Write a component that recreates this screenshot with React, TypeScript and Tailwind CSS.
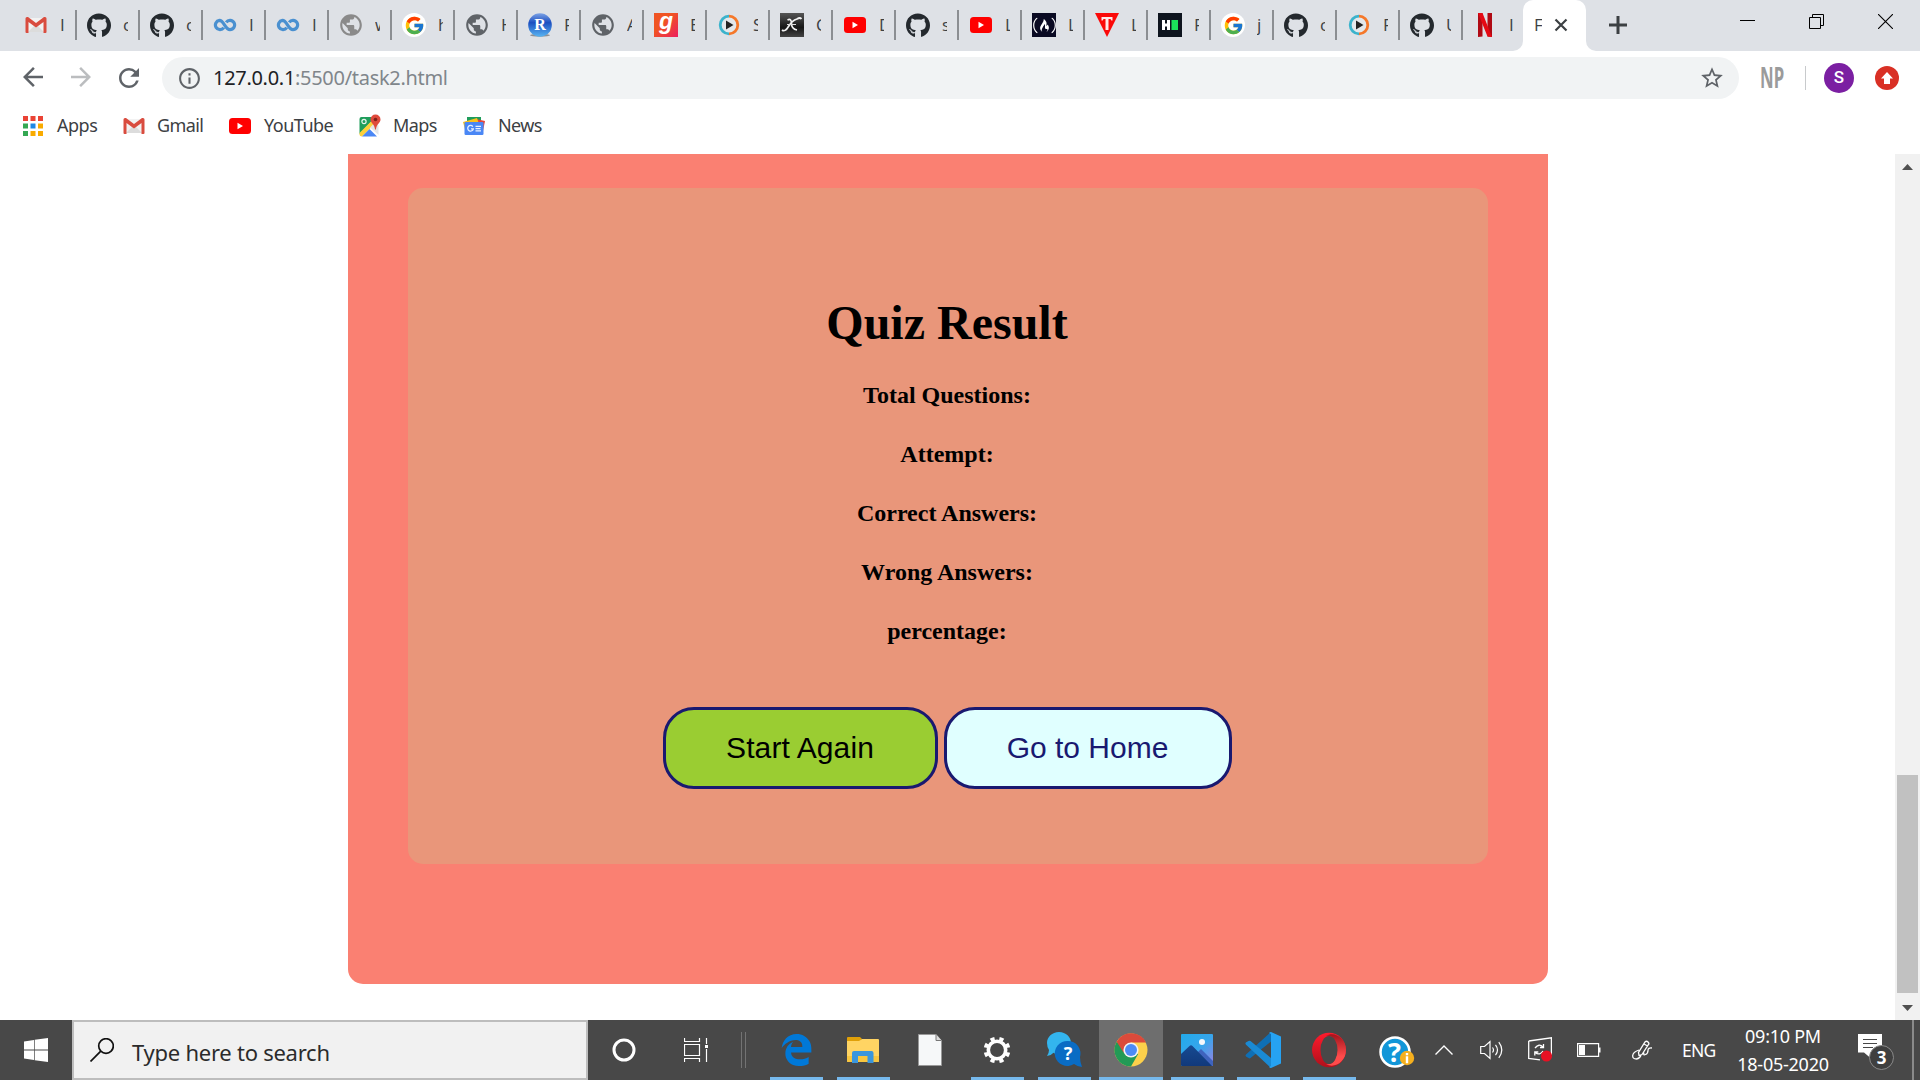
import React from 'react';
import { FaGithub, FaFreeCodeCamp } from 'react-icons/fa';
import { FcGoogle } from 'react-icons/fc';
import { MdPublic, MdArrowBack, MdArrowForward, MdRefresh, MdInfoOutline, MdStarBorder } from 'react-icons/md';

const Gmail = () => (
  <svg viewBox="0 0 24 24" className="h-6 w-6">
    <path d="M3 5h18v14H3z" fill="#f2f2f2" />
    <path d="M4 19l8-8 8 8z" fill="#dcdcdc" />
    <path d="M1.500 5.500q0-1.500 1.500-1.500h1l8 6 8-6h1q1.500 0 1.500 1.500V19q0 1-1 1h-2V9l-7.500 5.500L4.500 9v11h-2q-1 0-1-1z" fill="#d94c3f" />
  </svg>
);
const YouTube = () => (
  <svg viewBox="0 0 24 24" className="h-6 w-6">
    <rect x="1" y="4" width="22" height="16" rx="3.500" fill="#f00" />
    <path d="M9.500 8.700v6.600l5.500-3.300z" fill="#fff" />
  </svg>
);
const Github = () => <FaGithub size={25} color="#24292e" />;
const Coursera = () => (
  <svg viewBox="0 0 24 24" className="h-6 w-6" fill="none" stroke="#4a90d0" strokeWidth="3.200">
    <path d="M10.800 14.600A4.600 4.600 0 1 1 6.500 7.400C11 7.400 12 16.600 17 16.600a4.600 4.600 0 1 0-3.800-7.200" />
  </svg>
);
const Globe = ({ light }: { light?: boolean }) => <MdPublic size={26} className="shrink-0" color={light ? '#8a8a8a' : '#5f6368'} />;
const Google = () => (
  <span className="flex h-6 w-6 items-center justify-center rounded-full bg-white"><FcGoogle size={21} /></span>
);
const RStudio = () => (
  <svg viewBox="0 0 24 24" className="h-6 w-6">
    <defs>
      <linearGradient id="rs" x1="0" y1="0" x2="0" y2="1">
        <stop offset="0" stopColor="#7da3e6" /><stop offset=".4" stopColor="#1c4fc0" /><stop offset="1" stopColor="#58b4f2" />
      </linearGradient>
    </defs>
    <ellipse cx="12" cy="22.300" rx="10" ry="1.500" fill="#8c8f94" />
    <circle cx="12" cy="12" r="11.800" fill="url(#rs)" />
    <text x="12" y="16.500" textAnchor="middle" fontSize="16" fontWeight="700" fontFamily="Liberation Serif" fill="#fff">R</text>
  </svg>
);
const Gaana = () => (
  <svg viewBox="0 0 24 24" className="h-6 w-6">
    <defs>
      <linearGradient id="ga" x1="0" y1="0" x2="1" y2="1"><stop offset=".4" stopColor="#f05423" /><stop offset="1" stopColor="#ec1f5f" /></linearGradient>
    </defs>
    <path d="M0 0h24v24H0z" fill="url(#ga)" />
    <text x="12" y="16" textAnchor="middle" fontSize="23" fontWeight="700" fontStyle="italic" fontFamily="Liberation Sans" fill="#fff">g</text>
  </svg>
);
const Play = () => (
  <svg viewBox="0 0 24 24" className="h-6 w-6" fill="none" strokeWidth="2.800">
    <circle cx="12" cy="12" r="8" fill="#e4e8eb" />
    <path d="M12 20.800A8.800 8.800 0 0 1 12 3.200" stroke="#3bb3cc" />
    <path d="M12 3.200a8.800 8.800 0 0 1 0 17.600" stroke="#f5782a" />
    <path d="M9 7.500v9l7.500-4.500z" fill="#222" />
  </svg>
);
const XIcon = () => (
  <svg viewBox="0 0 24 24" className="h-6 w-6">
    <defs>
      <linearGradient id="xg" x1="0" y1="0" x2="0" y2="1"><stop offset="0" stopColor="#555" /><stop offset=".6" stopColor="#161616" /><stop offset="1" stopColor="#444" /></linearGradient>
    </defs>
    <path d="M0 0h24v24H0z" fill="url(#xg)" />
    <path d="M7.500 7q4-2 4 3.500T17 17M2 17q3 2.500 6.500-3.500T17 6q3-2 4.500 0" fill="none" stroke="#f2f2f2" strokeWidth="1.700" />
    <path d="M7 11.500h9" stroke="#ddd" strokeWidth="1" />
  </svg>
);
const Fcc = () => (
  <span className="flex h-6 w-6 items-center justify-center bg-[#0a0a23]"><FaFreeCodeCamp size={23} color="#fff" /></span>
);
const TIcon = () => (
  <svg viewBox="0 0 24 24" className="h-6 w-6">
    <path d="M0 0h24L12 24z" fill="#fb0909" />
    <path d="M6.500 4h11v3.600h-1.200L15.500 6H13.500v11h-3V6h-2l-.8 1.600H6.500z" fill="#ffe8e8" />
  </svg>
);
const HackerRank = () => (
  <svg viewBox="0 0 24 24" className="h-6 w-6">
    <path d="M0 0h24v24H0z" fill="#0e141e" />
    <path d="M4 7h3v3.500h2V7h3v10H9v-3.500H7V17H4z" fill="#fff" />
    <path d="M13.500 7h6.500v10h-6.500z" fill="#1be05a" />
  </svg>
);
const Netflix = () => (
  <svg viewBox="0 0 24 24" className="h-6 w-6">
    <path d="M5 0h4.500v23.500L5 24zM14.500 0H19v24l-4.500-.5z" fill="#b00a14" />
    <path d="M5 0h4.500L19 24l-4.500-.5z" fill="#e50914" />
  </svg>
);
const Maps = () => (
  <svg viewBox="0 0 24 24" className="h-6 w-6">
    <path d="M1.500 5q0-2 2-2H18L1.500 20z" fill="#1f9d5b" />
    <path d="M1.500 19L17 3.500l3 3L4 22.500q-2.500 0-2.500-2z" fill="#fdd13a" />
    <path d="M12 13.500l5-5 3.500 3V21z" fill="#e3e5e8" />
    <path d="M4 22.500l7.500-7.500 7.500 7.500z" fill="#4a87f5" />
    <circle cx="6" cy="7.500" r="2.100" fill="none" stroke="#e8f5ee" strokeWidth="1.200" />
    <path d="M17.500.5a5 5 0 0 1 5 5c0 3.500-4 4.500-4.600 10h-.8c-.6-5.500-4.600-6.500-4.600-10a5 5 0 0 1 5-5z" fill="#df4a3c" />
    <circle cx="17.500" cy="5.500" r="1.800" fill="#7d2119" />
  </svg>
);
const News = () => (
  <svg viewBox="0 0 24 24" className="h-6 w-6">
    <path d="M5 3h14v8H5z" fill="#1f9d5b" />
    <path d="M14 5l9 2-2 10h-7z" fill="#e5453a" />
    <path d="M1 8l14-4 3 9-14 6z" fill="#fbc11c" />
    <rect x="2.500" y="8" width="19" height="13" rx="1.200" fill="#4a87f5" />
    <path d="M10.800 12.600a2.800 2.800 0 1 0 .5 2.200H9M13.500 12.300H19M13.500 14.600h5M13.500 16.800H19" fill="none" stroke="#eaf1fe" strokeWidth="1.300" />
  </svg>
);

const tabs: [React.ReactNode, string][] = [
  [<Gmail />, 'I'], [<Github />, 'c'], [<Github />, 'c'], [<Coursera />, 'I'], [<Coursera />, 'I'], [<Globe light />, 'w'],
  [<Google />, 'h'], [<Globe />, 'H'], [<RStudio />, 'F'], [<Globe />, 'A'], [<Gaana />, 'E'], [<Play />, 'S'],
  [<XIcon />, 'C'], [<YouTube />, 'D'], [<Github />, 's'], [<YouTube />, 'L'], [<Fcc />, 'L'], [<TIcon />, 'L'],
  [<HackerRank />, 'F'], [<Google />, 'j'], [<Github />, 'c'], [<Play />, 'F'], [<Github />, 'U'], [<Netflix />, 'I'],
];

function TabStrip() {
  return (
    <div className="flex h-[51px] bg-[#dee1e6] pl-[14px] font-['Open_Sans'] text-[17px] text-[#3c4043]">
      {tabs.map(([icon, label], i) => (
        <div key={i} className="flex h-[50px] w-[63px] shrink-0 items-center pl-[10px]">
          <span className="flex w-6 shrink-0 justify-center">{icon}</span>
          <span className="ml-[12px] w-[5px] overflow-hidden">{label}</span>
          {i < tabs.length - 1 && <span className="ml-auto h-[30px] w-[2px] bg-[#8b8e92]" />}
        </div>
      ))}
      <div className="-ml-[13px] flex h-[51px] items-end">
        <span className="h-[10px] w-[10px] bg-white"><span className="block h-[10px] w-[10px] rounded-br-[10px] bg-[#dee1e6]" /></span>
        <div className="flex h-[51px] w-[63px] items-center rounded-t-[10px] bg-white pb-px pl-[11px]">
          <span className="w-[8px] overflow-hidden">F</span>
          <svg viewBox="0 0 14 14" className="ml-[12px] h-[14px] w-[14px]" stroke="#3c4043" strokeWidth="2.200"><path d="M1.500 1.500l11 11M12.500 1.500l-11 11" /></svg>
        </div>
        <span className="h-[10px] w-[10px] bg-white"><span className="block h-[10px] w-[10px] rounded-bl-[10px] bg-[#dee1e6]" /></span>
      </div>
      <svg viewBox="0 0 18 18" className="mt-[16px] ml-[13px] h-[18px] w-[18px]" stroke="#3c4043" strokeWidth="3"><path d="M0 9h18M9 0v18" /></svg>
      <div className="mt-[14px] mr-[27px] ml-auto flex gap-[54px]">
        <svg viewBox="0 0 15 15" className="h-[15px] w-[15px]"><path d="M0 6.500h15" stroke="#000" /></svg>
        <svg viewBox="0 0 15 15" className="h-[15px] w-[15px]" fill="none" stroke="#000"><path d="M.5 3.500h11v11H.5zM3.500 3.500v-3h11v11h-3" /></svg>
        <svg viewBox="0 0 15 15" className="h-[15px] w-[15px]" stroke="#000" strokeWidth="1.100"><path d="M0 0l15 15M15 0L0 15" /></svg>
      </div>
    </div>
  );
}

function Toolbar() {
  return (
    <div className="flex h-[54px] items-center bg-white pl-[18px]">
      <MdArrowBack size={30} color="#5f6368" className="mb-[2px]" />
      <MdArrowForward size={30} color="#bbbdbf" className="mb-[2px] ml-[18px]" />
      <MdRefresh size={30} color="#5f6368" className="mb-px ml-[18px]" />
      <div className="ml-[18px] flex h-[42px] w-[1577px] items-center rounded-full bg-[#f1f3f4] pl-[15px]">
        <MdInfoOutline size={25} color="#5f6368" />
        <span className="ml-[11px] text-[20px] tracking-[-0.3px] text-[#80868b]"><span className="text-[#202124]">127.0.0.1</span>:5500/task2.html</span>
        <MdStarBorder size={26} color="#5f6368" className="mr-[14px] ml-auto" />
      </div>
      <span className="mb-[2px] ml-[21px] w-[24px] origin-left scale-x-[.6] text-[28px] leading-none font-bold text-[#9b9b9b]">NP</span>
      <span className="ml-[21px] h-6 w-px bg-[#c8cacc]" />
      <span className="ml-[18px] flex h-[30px] w-[30px] items-center justify-center rounded-full bg-[#7b1fa2] font-[Roboto] text-[17px] font-medium text-white">S</span>
      <svg viewBox="0 0 24 24" className="ml-[21px] h-6 w-6">
        <circle cx="12" cy="12" r="12" fill="#d93025" />
        <path d="M12 6l6 6.500h-3V18H9v-5.500H6z" fill="#fff" />
      </svg>
    </div>
  );
}

const dots = ['#ea4335', '#ea4335', '#ea4335', '#34a853', '#1e88e5', '#f9ab00', '#34a853', '#f9ab00', '#f9ab00'];
function Bookmarks() {
  return (
    <div className="flex h-[49px] items-center bg-white pb-[8px] pl-[23px] text-[18px] text-[#3c4043]">
      <svg viewBox="0 0 20 20" className="h-[20px] w-[20px]">
        {dots.map((c, i) => <rect key={i} x={(i % 3) * 7.5} y={Math.floor(i / 3) * 7.5} width="5" height="5" fill={c} />)}
      </svg>
      <span className="ml-[14px] w-[65px] tracking-[-0.5px]">Apps</span>
      <Gmail /><span className="ml-[11px] w-[71px] tracking-[-0.6px]">Gmail</span>
      <YouTube /><span className="ml-[12px] w-[94px] tracking-[-0.5px]">YouTube</span>
      <Maps /><span className="ml-[11px] w-[69px] tracking-[-0.6px]">Maps</span>
      <News /><span className="ml-[12px] tracking-[-0.6px]">News</span>
    </div>
  );
}

function Page() {
  return (
    <div className="flex h-[866px] overflow-hidden bg-white">
      <div className="flex-1 pl-[348px]">
        <div className="h-[830px] w-[1200px] rounded-b-[15px] bg-[#fa8072] px-[60px] pt-[34px]">
          <div className="h-[676px] rounded-[15px] bg-[#e9967a] pt-[107px] pr-[2px] text-center font-['Liberation_Serif'] font-bold text-black">
            <h1 className="text-[48px] leading-[56px]">Quiz Result</h1>
            <div className="mt-[15px] text-[24px] leading-[59px]">
              <p>Total Questions:</p>
              <p>Attempt:</p>
              <p>Correct Answers:</p>
              <p>Wrong Answers:</p>
              <p>percentage:</p>
            </div>
            <div className="mt-[46px] flex justify-center gap-[6px] font-['Liberation_Sans'] text-[30px] font-normal">
              <button className="h-[82px] w-[275px] rounded-[31px] border-3 border-[#191970] bg-[#9acd32] pb-[2px] tracking-[0.1px]">Start Again</button>
              <button className="h-[82px] w-[288px] rounded-[31px] border-3 border-[#191970] bg-[#e0ffff] pb-[2px] text-[#191970]">Go to Home</button>
            </div>
          </div>
        </div>
      </div>
      <div className="flex w-[25px] flex-col items-center bg-[#f1f1f1]">
        <svg viewBox="0 0 11 6" className="mt-[10px] h-[6px] w-[11px]"><path d="M5.500 0L11 6H0z" fill="#505050" /></svg>
        <div className="mt-[605px] h-[218px] w-[21px] bg-[#c1c1c1]" />
        <svg viewBox="0 0 11 6" className="mt-[12px] h-[6px] w-[11px]"><path d="M5.500 6L11 0H0z" fill="#505050" /></svg>
      </div>
    </div>
  );
}

const apps: { w: string; open: boolean; active?: boolean; icon: React.ReactNode }[] = [
  {
    w: 'w-[67px]', open: true, icon: (
      <svg viewBox="20 8 472 496" className="h-8 w-[31px]" fill="#0078d7">
        <path d="M486.286 243.671c0-44.032-7.754-84.465-28.801-122.405C416.498 47.879 343.912 8.001 258.893 8.001 118.962 7.724 40.617 113.214 26.056 227.679c42.429-61.312 117.073-121.376 220.375-124.966 0 0 109.666 0 99.419 104.957H169.997c6.369-37.386 18.554-58.986 34.339-78.926-75.048 34.893-121.850 96.096-120.742 188.315.83 71.448 50.124 144.836 120.743 171.976 83.357 31.847 192.776 7.200 240.132-21.324V363.307c-80.864 56.494-270.871 60.925-272.255-67.572h314.073v-52.064z" />
      </svg>
    ),
  },
  {
    w: 'w-[67px]', open: true, icon: (
      <svg viewBox="0 0 32 32" className="h-8 w-8">
        <path d="M0 4q0-1 1-1h12l2 2-2 2H0z" fill="#e0a008" />
        <path d="M0 7h12l3-2h16q1 0 1 1v21q0 1-1 1H1q-1 0-1-1z" fill="#ffd463" />
        <path d="M0 22h32v5q0 1-1 1H1q-1 0-1-1z" fill="#f8c63f" />
        <path d="M5 29V19q0-2 2-2h17.500q2 0 2 2v10h-6v-7h-9.500v7z" fill="#3a96dd" />
      </svg>
    ),
  },
  {
    w: 'w-[67px]', open: false, icon: (
      <svg viewBox="0 0 24 32" className="h-8 w-6">
        <path d="M.5.5H18l5.500 6v25H.5z" fill="#f6f8f9" stroke="#999" /><path d="M18 .5v6h5.500" fill="#ddd" stroke="#777" />
      </svg>
    ),
  },
  {
    w: 'w-[67px]', open: true, icon: (
      <svg viewBox="0 0 28 28" className="h-7 w-7" fill="none" stroke="#fff">
        <circle cx="14" cy="14" r="8.700" strokeWidth="3.600" />
        <circle cx="14" cy="14" r="11.500" strokeWidth="3.800" pathLength="80" strokeDasharray="4.600 5.400" strokeDashoffset="-2.700" />
      </svg>
    ),
  },
  {
    w: 'w-[67px]', open: true, icon: (
      <svg viewBox="0 0 36 36" className="h-9 w-9">
        <path d="M13 0c7 0 12 5 12 11s-5 11-12 11c-2 0-4 0-5.500-1.300Q4.500 24 1 24q2-3 2-6Q1 15 1 11C1 5 6 0 13 0z" fill="#33b5ee" />
        <path d="M22 9a12.500 12.500 0 0 1 12 16q0 5 2 10-4 0-8-3a12.500 12.500 0 1 1-6-23z" fill="#0a6cc4" />
        <text x="22" y="28" textAnchor="middle" fontSize="18" fontWeight="700" fontFamily="Noto Sans" fill="#fff">?</text>
      </svg>
    ),
  },
  {
    w: 'w-[66px]', open: true, active: true, icon: (
      <svg viewBox="0 0 34 34" className="h-[34px] w-[34px]">
        <circle cx="17" cy="17" r="16.500" fill="#fcd04b" />
        <path d="M17 17L2.700 8.750A16.500 16.500 0 0 0 17 33.500l7.150-12.400z" fill="#229a56" />
        <path d="M2.700 8.750A16.500 16.500 0 0 1 32 9.500H17l-7.500 10z" fill="#db4a3b" />
        <circle cx="17" cy="17" r="7.600" fill="#f2f2f2" /><circle cx="17" cy="17" r="6" fill="#4c8bf5" />
      </svg>
    ),
  },
  {
    w: 'w-[66px]', open: true, icon: (
      <svg viewBox="0 0 32 32" className="h-8 w-8">
        <defs>
          <linearGradient id="sky" x1="0" y1="0" x2="1" y2="1"><stop offset="0" stopColor="#22aaea" /><stop offset=".5" stopColor="#36a6ec" /><stop offset="1" stopColor="#9a7fe0" /></linearGradient>
          <linearGradient id="hill" x1="0" y1="0" x2="0" y2="1"><stop offset="0" stopColor="#174a91" /><stop offset="1" stopColor="#11397b" /></linearGradient>
        </defs>
        <rect width="32" height="32" rx="1" fill="url(#sky)" />
        <path d="M13 22l7-7 12 12v4q0 1-1 1H13z" fill="#3f63bd" />
        <path d="M0 20l8.500-8q1.500-1.500 3 0L31 32H1q-1 0-1-1z" fill="url(#hill)" />
        <circle cx="21" cy="8" r="3" fill="#f4f8fb" />
      </svg>
    ),
  },
  {
    w: 'w-[66px]', open: true, icon: (
      <svg viewBox="0 0 36 36" className="h-9 w-9">
        <path d="M26 0L1 22.500q-1 1 0 2L3.500 26q1 .8 2 0L26 9.500z" fill="#0f6fb5" />
        <path d="M26 36L.8 12.500q-.8-1 0-2L3.500 9q1-.7 2 0L26 26z" fill="#1a8ad4" />
        <path d="M26 0l10 4.500v27L26 36q-1 0-2-1l2-1V2l-2-1q1-1 2-1z" fill="#26a2f2" />
      </svg>
    ),
  },
  {
    w: 'w-[66px]', open: true, icon: (
      <svg viewBox="0 0 36 36" className="h-9 w-9">
        <defs>
          <linearGradient id="op" x1="0" y1="0" x2="0" y2="1"><stop offset="0" stopColor="#ff1b2d" /><stop offset="1" stopColor="#b0101b" /></linearGradient>
          <linearGradient id="op2" x1="0" y1="0" x2="0" y2="1"><stop offset="0" stopColor="#a3141c" /><stop offset=".7" stopColor="#ff4b4b" /></linearGradient>
        </defs>
        <ellipse cx="18" cy="18" rx="17" ry="17.300" fill="url(#op)" />
        <path d="M15 4c8-5 20 2 20 14S23 37 15 32c6 2 11-5 11-14S21 2 15 4z" fill="url(#op2)" />
        <ellipse cx="18" cy="18" rx="8.500" ry="14" fill="#484848" />
      </svg>
    ),
  },
];

function Taskbar() {
  return (
    <div className="flex h-[60px] items-center bg-[#484848] text-white">
      <svg viewBox="0 0 24 24" className="ml-6 h-6 w-6" fill="#fff"><path d="M0 3.400L10 2v9.600H0zM10.700 1.800L24 0v11.600H10.700zM0 12.400h10V22L0 20.600zM10.700 12.400H24V24l-13.300-1.800z" /></svg>
      <div className="ml-6 flex h-[60px] w-[516px] items-center border-2 border-[#bdbdbd] bg-[#f1f1f1] pl-[16px] text-[#2b2b2b]">
        <svg viewBox="0 0 24 24" className="h-6 w-6" fill="none" stroke="#111" strokeWidth="1.700"><circle cx="16" cy="8" r="7.300" /><path d="M10.800 13.200L.5 23.500" /></svg>
        <span className="ml-[18px] pt-[4px] text-[22px] tracking-[-0.25px] whitespace-nowrap">Type here to search</span>
      </div>
      <svg viewBox="0 0 24 24" className="ml-6 h-6 w-6" fill="none" stroke="#fff"><circle cx="12" cy="12" r="10" strokeWidth="3" /></svg>
      <svg viewBox="0 0 24 24" className="ml-12 h-6 w-6" fill="none" stroke="#fff" strokeWidth="1.200"><path d="M.5 0v3.500h15V0M.5 24v-3.500h15V24M.5 6.500h15v11H.5zM22.500 0v6M22.500 11v13" /><path d="M21 7h3v3h-3z" fill="#fff" stroke="none" /></svg>
      <span className="ml-[33px] h-9 w-[5px] border-x border-[#737373]" />
      <div className="ml-[17px] flex">
        {apps.map((a, i) => (
          <div key={i} className={`${a.w} flex h-[60px] flex-col items-center`}>
            <div className={`flex h-[57px] w-[64px] items-center justify-center pt-[3px] ${a.active ? 'bg-[#6e6e6e]' : 'pr-px'}`}>{a.icon}</div>
            {a.open && <span className={`h-[3px] bg-[#76b9ed] ${a.active ? 'w-[64px]' : 'w-[53px]'}`} />}
          </div>
        ))}
      </div>
      <svg viewBox="0 0 36 34" className="mt-[4px] ml-[17px] h-[34px] w-9">
        <circle cx="16" cy="17" r="14.500" fill="#1296d8" stroke="#fff" strokeWidth="2.500" />
        <text x="15.500" y="26.500" textAnchor="middle" fontSize="27" fontWeight="700" fontFamily="Noto Sans" fill="#fff">?</text>
        <circle cx="28" cy="23" r="7.200" fill="#f6b01e" />
        <path d="M26.800 18h2.400v2.200h-2.400zM26.800 21.300h2.400v7h-2.400z" fill="#fff" />
      </svg>
      <svg viewBox="0 0 18 10" className="ml-[20px] h-[10px] w-[18px]" fill="none" stroke="#fff" strokeWidth="1.400"><path d="M.5 9.500L9 1l8.500 8.500" /></svg>
      <svg viewBox="0 0 24 20" className="ml-[27px] h-5 w-6" fill="none" stroke="#fff" strokeWidth="1.200"><path d="M.7 6.500h3.800L10 1.500v17l-5.500-5H.7zM12.500 7.500q2 2.500 0 5M15.500 4.800q4 5.200 0 10.400M18.800 2.200q6 7.800 0 15.600" /></svg>
      <svg viewBox="0 0 24 26" className="ml-[24px] h-[26px] w-6" fill="none" stroke="#fff" strokeWidth="1.300">
        <path d="M.7 4L23.400.8v17M12 22.800L.7 21.500V4" />
        <path d="M7 11q4-5 8-1M15.500 7v3.500H12M15 14q-3 5-8 1.500M6.800 18.500V15h3.500" />
        <circle cx="18.500" cy="19" r="5.500" fill="#e81123" stroke="none" />
      </svg>
      <svg viewBox="0 0 24 14" className="ml-[25px] h-[14px] w-6"><path d="M.6.600h21v12.800H.6z" fill="none" stroke="#fff" strokeWidth="1.200" /><path d="M2 2h6v10H2zM22 4.500h1.500v5H22z" fill="#fff" /></svg>
      <svg viewBox="0 0 20 20" className="ml-[31px] h-5 w-5" fill="none" stroke="#fff" strokeWidth="1.300">
        <path d="M7 15.500L6.500 12.500 13 2q1.500-1.500 3 0t.5 2.500L10 14.500zM12 4l3.500 2M7 10Q1 12 .7 15.500T4.500 19Q8 18.500 9 15M12 12.500q-1 3 1.500 2T16 10.500t4-2.500" />
      </svg>
      <span className="ml-[30px] w-[54px] text-[17.500px] tracking-[-0.8px]">ENG</span>
      <div className="w-[94px] text-center text-[18px] leading-[28px] tracking-[-0.25px] whitespace-nowrap"><div>09:10 PM</div><div>18-05-2020</div></div>
      <svg viewBox="0 0 36 36" className="mt-[4px] ml-[28px] h-9 w-9 shrink-0">
        <path d="M0 0h24v18.500H12.500V24L6 18.500H0z" fill="#fff" />
        <path d="M5 5.500h14M5 9.500h14M5 13.500h10" stroke="#484848" />
        <circle cx="23.500" cy="23.500" r="12" fill="#3f3f3f" stroke="#8a8a8a" />
        <text x="23.500" y="30" textAnchor="middle" fontSize="17" fontWeight="700" fontFamily="Noto Sans" fill="#fff">3</text>
      </svg>
      <span className="mr-[6px] ml-auto h-[60px] w-[2px] bg-[#8a8a8a]" />
    </div>
  );
}

export default function App() {
  return (
    <div className="h-[1080px] w-[1920px] overflow-hidden bg-white font-['Noto_Sans',sans-serif]">
      <TabStrip />
      <Toolbar />
      <Bookmarks />
      <Page />
      <Taskbar />
    </div>
  );
}
